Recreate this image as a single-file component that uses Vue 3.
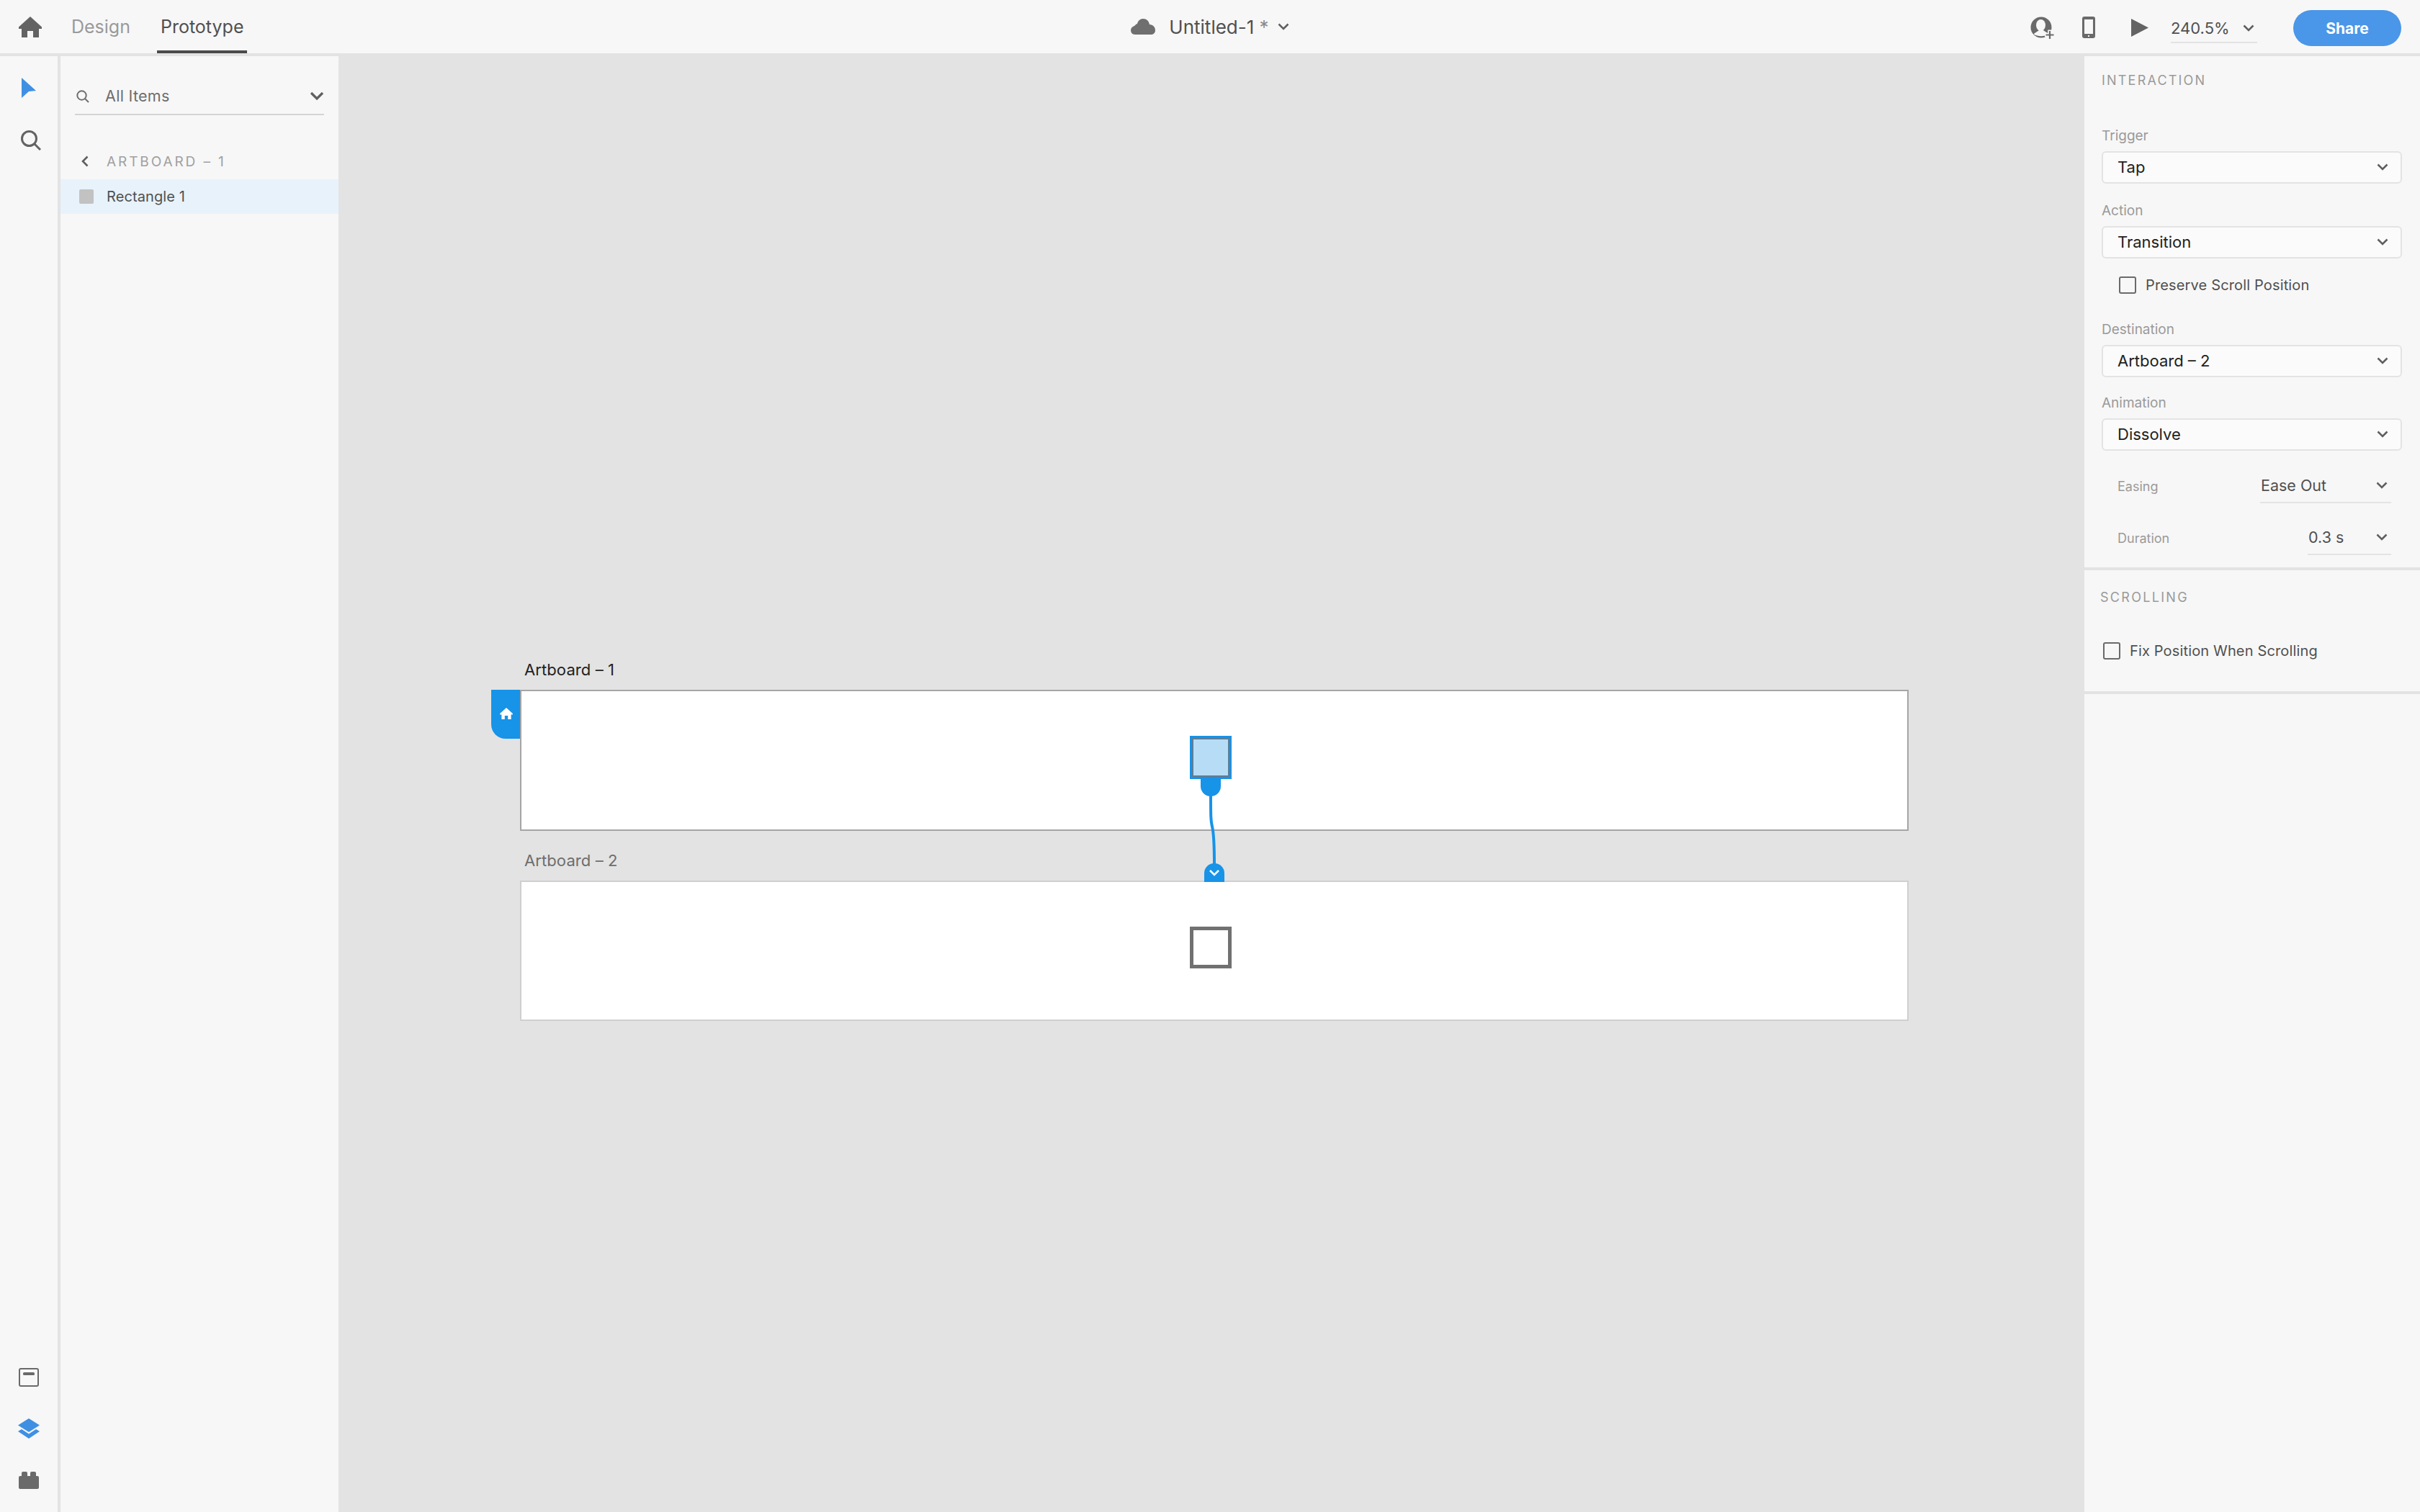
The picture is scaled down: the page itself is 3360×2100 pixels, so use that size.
<template>
  <div class="app">
    <header class="topbar">
      <div class="top-left">
        <svg class="home" width="32" height="29" viewBox="0 0 32 29"><path d="M16 0L32 14.5V17H28V29H20V20H12V29H4V17H0V14.5Z" /></svg>
        <span class="tab">Design</span>
        <span class="tab active">Prototype</span>
      </div>
      <div class="doc-title">
        <svg class="cloud" width="34" height="22" viewBox="0 0 34 22"><path d="M6 22C2 22 0 19 0 16C0 13 2 11 5 10C7 8 8 7 9 7C10 3 13 0 17 0C22 0 25 3 26 8C31 8 34 12 34 16C34 20 31 22 28 22Z" /></svg>
        <span class="doc-name">Untitled-1 <span class="star">*</span></span>
        <svg class="chev" width="16" height="10" viewBox="0 0 16 10"><path d="M1.5 1.5L8 8L14.5 1.5" /></svg>
      </div>
      <div class="top-right">
        <svg class="user" width="34" height="32" viewBox="0 0 34 32">
          <circle cx="15" cy="15" r="14.5" fill="#6a6a6a" />
          <ellipse cx="14.5" cy="12" rx="6.5" ry="8" fill="#f7f7f7" />
          <path d="M4.5 24.5C7 22 10 21 12 19L18 19C20 21 23 22 25.5 24.5C19 28 11 28 4.5 24.5Z" fill="#f7f7f7" />
          <path d="M27 18.5V32M20 25.5H34" stroke="#f7f7f7" stroke-width="5.5" />
          <path d="M27 20V31M21.5 25.5H32.5" stroke="#6a6a6a" stroke-width="2.2" fill="none" />
        </svg>
        <svg class="phone" width="18" height="30" viewBox="0 0 18 30">
          <rect width="18" height="30" rx="3" fill="#6a6a6a" />
          <rect x="3" y="4" width="12" height="20" fill="#f7f7f7" />
          <rect x="8" y="26" width="2" height="2" fill="#f7f7f7" />
        </svg>
        <svg class="play" width="24" height="25" viewBox="0 0 24 25"><path d="M0 0L24 12.5L0 25Z" /></svg>
        <div class="zoom-box">
          <span>240.5%</span>
          <svg class="chev" width="16" height="10" viewBox="0 0 16 10"><path d="M1.5 1.5L8 8L14.5 1.5" /></svg>
        </div>
        <button class="share">Share</button>
      </div>
    </header>

    <div class="body">
      <nav class="rail">
        <div class="rail-group">
          <svg class="cursor" width="20" height="28" viewBox="0 0 20 28"><path d="M0 0L20 18L10 19L0 28Z" /></svg>
          <svg class="rail-search" width="28" height="28" viewBox="0 0 28 28"><circle cx="11.5" cy="11.5" r="10" /><path d="M19 19L27 27" /></svg>
        </div>
        <div class="rail-group bottom">
          <svg width="28" height="26" viewBox="0 0 28 26"><rect x="1" y="1" width="26" height="24" rx="2" fill="none" stroke="#6a6a6a" stroke-width="2" /><rect x="6" y="6" width="16" height="4" rx="1.5" fill="#6a6a6a" /></svg>
          <svg width="30" height="28" viewBox="0 0 30 28"><path d="M15 0L30 9.5L15 19L0 9.5Z" fill="#3f90e3" /><path d="M0 18L5 15L15 21.5L25 15L30 18L15 28Z" fill="#3f90e3" /></svg>
          <svg class="plugin" width="28" height="24" viewBox="0 0 28 24"><path d="M4 6V2Q4 0 6 0H10Q12 0 12 2V6H16V2Q16 0 18 0H22Q24 0 24 2V6H26Q28 6 28 8V22Q28 24 26 24H2Q0 24 0 22V8Q0 6 2 6Z" fill="#6a6a6a" /></svg>
        </div>
      </nav>

      <aside class="layers">
        <div class="filter">
          <svg class="mini-search" width="18" height="18" viewBox="0 0 18 18"><circle cx="7.5" cy="7.5" r="6.2" /><path d="M12 12L17 17" /></svg>
          <span class="filter-text">All Items</span>
          <svg class="filter-chev" width="20" height="13" viewBox="0 0 20 13"><path d="M2 2L10 10L18 2" /></svg>
        </div>
        <div class="crumb">
          <svg class="back" width="10" height="16" viewBox="0 0 10 16"><path d="M8.5 1.5L2 8L8.5 14.5" /></svg>
          <span>ARTBOARD – 1</span>
        </div>
        <div class="layer-row">
          <span class="swatch"></span>
          <span>Rectangle 1</span>
        </div>
      </aside>

      <main class="canvas">
        <div class="artboard first">
          <span class="ab-title">Artboard – 1</span>
          <div class="home-flag">
            <svg width="18" height="16" viewBox="0 0 32 29"><path d="M16 0L32 14.5V17H28V29H20V20H12V29H4V17H0V14.5Z" fill="#fff" /></svg>
          </div>
          <div class="shape selected"></div>
        </div>
        <div class="artboard second">
          <span class="ab-title">Artboard – 2</span>
          <div class="shape"></div>
        </div>
        <svg class="wire" width="33" height="143" viewBox="0 0 33 143">
          <path d="M0 0H28V10A14 14 0 0 1 0 10Z" fill="#1793e8" />
          <path d="M14 22C14 50 14 58 16 66C18 74 19 85 19 120" fill="none" stroke="#1793e8" stroke-width="4" />
          <path d="M5 143V131A14 14 0 0 1 33 131V143Z" fill="#1793e8" />
          <path d="M13 127L19 133L25 127" fill="none" stroke="#fff" stroke-width="2.6" />
        </svg>
      </main>

      <aside class="props">
        <section class="section interaction">
          <h3>INTERACTION</h3>
          <template v-for="f in fields" :key="f.label">
            <label class="field-label" :class="{ tight: f.tight }">{{ f.label }}</label>
            <div class="select">
              <span>{{ f.value }}</span>
              <svg class="chev" width="16" height="10" viewBox="0 0 16 10"><path d="M1.5 1.5L8 8L14.5 1.5" /></svg>
            </div>
            <div v-if="f.check" class="check-row nested">
              <span class="box"></span>
              <span>{{ f.check }}</span>
            </div>
          </template>
          <div v-for="o in options" :key="o.label" class="option">
            <span class="option-label">{{ o.label }}</span>
            <div class="option-value" :style="{ width: o.width + 'px' }">
              <span>{{ o.value }}</span>
              <svg class="chev" width="16" height="10" viewBox="0 0 16 10"><path d="M1.5 1.5L8 8L14.5 1.5" /></svg>
            </div>
          </div>
        </section>
        <section class="section scrolling">
          <h3>SCROLLING</h3>
          <div class="check-row">
            <span class="box"></span>
            <span>Fix Position When Scrolling</span>
          </div>
        </section>
      </aside>
    </div>
  </div>
</template>

<script setup>
const fields = [
  { label: 'Trigger', value: 'Tap' },
  { label: 'Action', value: 'Transition', check: 'Preserve Scroll Position' },
  { label: 'Destination', value: 'Artboard – 2' },
  { label: 'Animation', value: 'Dissolve', tight: true }
];

const options = [
  { label: 'Easing', value: 'Ease Out', width: 182 },
  { label: 'Duration', value: '0.3 s', width: 116 }
];
</script>

<style>
html, body { margin: 0; background: #f7f7f7; }
</style>

<style scoped>
.app {
  width: 3360px;
  height: 2100px;
  display: flex;
  flex-direction: column;
  overflow: hidden;
  background: #f7f7f7;
  font-family: Inter, "Noto Sans", sans-serif;
  color: #505050;
}
svg { display: block; flex: none; }
.chev path, .filter-chev path, .back path {
  fill: none;
  stroke: #5f5f5f;
  stroke-width: 2.6;
}

/* top bar */
.topbar {
  height: 78px;
  box-sizing: border-box;
  flex: none;
  display: grid;
  grid-template-columns: 1fr auto 1fr;
  align-items: stretch;
  border-bottom: 4px solid #e3e3e3;
}
.top-left { display: flex; align-items: center; padding-left: 26px; }
.home path { fill: #636363; }
.tab {
  font-size: 25px;
  color: #9a9a9a;
  margin-left: 41px;
}
.tab.active {
  color: #505050;
  margin-left: 37px;
  height: 74px;
  line-height: 74px;
  padding: 0 5px;
  box-sizing: border-box;
  border-bottom: 4px solid #4b4b4b;
}
.doc-title { display: flex; align-items: center; }
.cloud path { fill: #6f6f6f; }
.doc-name { font-size: 26px; margin-left: 19px; }
.star { color: #8a8a8a; }
.doc-title .chev { margin-left: 12px; }
.top-right {
  display: flex;
  align-items: center;
  justify-content: flex-end;
  padding-right: 26px;
}
.user { margin-top: 4px; }
.phone { margin-left: 38px; margin-top: 2px; }
.play { margin-left: 50px; margin-top: 3px; }
.play path { fill: #636363; }
.zoom-box {
  margin-left: 31px;
  width: 120px;
  height: 40px;
  margin-top: 6px;
  display: flex;
  align-items: center;
  justify-content: space-between;
  box-sizing: border-box;
  padding-right: 4px;
  border-bottom: 2px solid #e3e3e3;
  font-size: 22px;
}
.share {
  margin-left: 50px;
  margin-top: 4px;
  width: 150px;
  height: 50px;
  border: none;
  border-radius: 25px;
  background: #4a96e8;
  color: #fff;
  font-family: inherit;
  font-size: 21px;
  font-weight: 700;
}

.body { flex: 1; display: flex; min-height: 0; }

/* tool rail */
.rail {
  width: 84px;
  box-sizing: border-box;
  flex: none;
  border-right: 4px solid #e3e3e3;
  display: flex;
  flex-direction: column;
  justify-content: space-between;
  align-items: center;
}
.rail-group { display: flex; flex-direction: column; align-items: center; padding-top: 30px; }
.rail-group.bottom { padding: 0 0 32px; gap: 44px; }
.plugin { margin-top: 2px; }
.cursor path { fill: #3f90e3; }
.rail-search { margin-top: 45px; margin-left: 6px; }
.rail-search circle, .rail-search path { fill: none; stroke: #636363; stroke-width: 3; }

/* layers panel */
.layers { width: 386px; flex: none; }
.filter {
  margin: 37px 20px 0;
  height: 45px;
  box-sizing: border-box;
  display: flex;
  align-items: center;
  border-bottom: 2px solid #d4d4d4;
}
.mini-search { margin-left: 2px; margin-bottom: 6px; }
.mini-search circle, .mini-search path { fill: none; stroke: #6e6e6e; stroke-width: 2; }
.filter-text { font-size: 21.5px; color: #6e6e6e; margin-left: 22px; margin-bottom: 8px; letter-spacing: 0.3px; }
.filter-chev { margin-left: auto; margin-bottom: 6px; }
.filter-chev path { stroke-width: 3.2; }
.crumb {
  margin-top: 52px;
  height: 24px;
  display: flex;
  align-items: center;
  padding-left: 29px;
  font-size: 19px;
  letter-spacing: 2.9px;
  color: #a0a0a0;
}
.crumb span { margin-left: 25px; }
.layer-row {
  margin-top: 13px;
  height: 48px;
  display: flex;
  align-items: center;
  background: #e8f2fa;
  padding-left: 26px;
  font-size: 20px;
  letter-spacing: 0.1px;
}
.swatch {
  width: 20px;
  height: 20px;
  border-radius: 2px;
  background: #c2c2c2;
  margin-right: 18px;
}

/* canvas, artboards sit on a free surface */
.canvas { flex: 1; position: relative; background: #e3e3e3; }
.artboard {
  position: absolute;
  left: 252px;
  width: 1928px;
  box-sizing: border-box;
  background: #fff;
}
.artboard.first { top: 880px; height: 196px; border: 2px solid #a5a5a5; }
.artboard.second { top: 1145px; height: 195px; border: 2px solid #cfcfcf; }
.ab-title {
  position: absolute;
  left: 4px;
  top: -44px;
  line-height: 28px;
  font-size: 22px;
  letter-spacing: 0.1px;
  white-space: nowrap;
}
.first .ab-title { color: #222; }
.second .ab-title { color: #6e6e6e; }
.home-flag {
  position: absolute;
  left: -42px;
  top: -2px;
  width: 40px;
  height: 68px;
  background: #1793e8;
  border-bottom-left-radius: 20px;
  display: flex;
  align-items: center;
  justify-content: center;
  padding: 0 0 3px 2px;
  box-sizing: border-box;
}
.shape {
  position: absolute;
  left: 928px;
  top: 62px;
  width: 58px;
  height: 58px;
  box-sizing: border-box;
  border: 5px solid #717171;
  background: #fff;
}
.shape.selected {
  height: 60px;
  background: #b7dcf6;
  border-color: #5a7f9b;
  outline: 2px solid #1793e8;
  outline-offset: -2px;
}
.wire { position: absolute; left: 1197px; top: 1004px; }

/* properties */
.props { width: 466px; flex: none; }
.section { border-bottom: 4px solid #e3e3e3; padding-left: 24px; }
.section h3 {
  margin: 0;
  line-height: 22px;
  font-size: 18px;
  font-weight: 400;
  color: #9a9a9a;
}
.interaction { height: 714px; box-sizing: border-box; padding-top: 23px; }
.interaction h3 { margin-bottom: 53px; letter-spacing: 2.2px; }
.field-label {
  display: block;
  line-height: 26px;
  font-size: 19px;
  color: #9a9a9a;
  margin-bottom: 8px;
}
.field-label.tight { margin-top: -2px; }
.select {
  width: 417px;
  height: 45px;
  box-sizing: border-box;
  border: 2px solid #e3e3e3;
  border-radius: 6px;
  background: #fbfbfb;
  display: flex;
  align-items: center;
  justify-content: space-between;
  padding: 0 17px 1px 20px;
  margin-bottom: 25px;
  font-size: 22px;
  color: #222;
}
.check-row {
  display: flex;
  align-items: center;
  line-height: 24px;
  font-size: 20px;
  letter-spacing: 0.15px;
  color: #505050;
}
.check-row.nested { margin: 25px 0 37px 24px; }
.box {
  width: 24px;
  height: 24px;
  box-sizing: border-box;
  border: 2px solid #6a6a6a;
  border-radius: 3px;
  margin-right: 13px;
}
.select:has(+ .check-row) { margin-bottom: 0; }
.option {
  width: 380px;
  height: 36px;
  margin: 0 0 36px 22px;
  display: flex;
  justify-content: space-between;
  align-items: flex-start;
}
.select + .option { margin-top: 37px; }
.option-label { font-size: 18px; color: #9a9a9a; line-height: 26px; }
.option-value {
  height: 36px;
  box-sizing: border-box;
  display: flex;
  align-items: center;
  justify-content: space-between;
  padding: 0 5px 12px 1px;
  border-bottom: 2px solid #e3e3e3;
  font-size: 21.5px;
}
.scrolling { height: 172px; box-sizing: border-box; padding-top: 27px; padding-left: 22px; }
.scrolling h3 { margin-bottom: 51px; letter-spacing: 2.3px; }
.scrolling .check-row { padding-left: 4px; }
</style>
